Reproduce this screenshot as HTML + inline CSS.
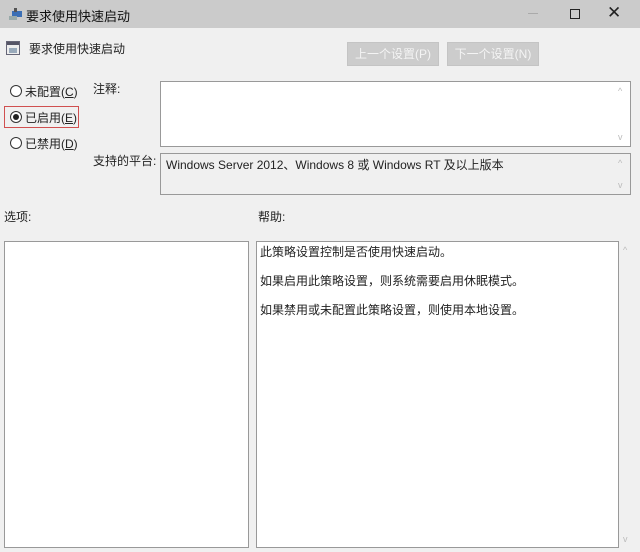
<!DOCTYPE html>
<html><head><meta charset="utf-8"><style>
*{margin:0;padding:0;box-sizing:border-box}
body{width:640px;height:552px;background:#f0f0f0;font-family:"Liberation Sans","Noto Sans CJK SC",sans-serif;font-size:12px;color:#222;position:relative;overflow:hidden}
.a{position:absolute;white-space:nowrap}
.box{position:absolute;border:1px solid #999;background:#fff}
.btn{position:absolute;background:#ccc;border:1px solid #c4c4c4;color:#f4f4f4;text-align:center;line-height:22px;font-size:12px}
.radio{position:absolute;width:12px;height:12px;border:1px solid #333;border-radius:50%;background:#fff}
.sb{position:absolute;color:#bbb;font-size:9px}
</style></head><body>
<div class="a" style="left:0;top:0;width:640px;height:28px;background:#cbcbcb"></div>
<svg class="a" style="left:8px;top:7px" width="16" height="14"><rect x="4" y="4" width="10" height="6" fill="#3b6fb5"/><rect x="1" y="9" width="8" height="4" fill="#9aa"/><rect x="6" y="1" width="3" height="4" fill="#555"/></svg>
<div class="a" style="left:26px;top:6px;font-size:13px;color:#111">要求使用快速启动</div>
<div class="a" style="left:528px;top:13px;width:10px;height:1px;background:#aaa"></div>
<div class="a" style="left:570px;top:9px;width:10px;height:10px;border:1px solid #222"></div>
<div class="a" style="left:607px;top:3px;font-size:17px;color:#222">✕</div>
<svg class="a" style="left:6px;top:41px" width="14" height="14"><rect x="0.5" y="0.5" width="13" height="13" fill="#eee" stroke="#667"/><rect x="1" y="1" width="12" height="3" fill="#556"/><rect x="3" y="7" width="8" height="5" fill="#9ab"/></svg>
<div class="a" style="left:29px;top:40px">要求使用快速启动</div>
<div class="btn" style="left:347px;top:42px;width:92px;height:24px">上一个设置(P)</div>
<div class="btn" style="left:447px;top:42px;width:92px;height:24px">下一个设置(N)</div>
<div class="radio" style="left:10px;top:85px"></div>
<div class="a" style="left:25px;top:83px">未配置(<u>C</u>)</div>
<div class="a" style="left:4px;top:106px;width:75px;height:22px;border:1px solid #d05050"></div>
<div class="radio" style="left:10px;top:111px"></div>
<div class="a" style="left:13px;top:114px;width:6px;height:6px;border-radius:50%;background:#222"></div>
<div class="a" style="left:25px;top:109px">已启用(<u>E</u>)</div>
<div class="radio" style="left:10px;top:137px"></div>
<div class="a" style="left:25px;top:135px">已禁用(<u>D</u>)</div>
<div class="a" style="left:93px;top:80px">注释:</div>
<div class="box" style="left:160px;top:81px;width:471px;height:66px"></div>
<div class="sb" style="left:618px;top:86px">^</div><div class="sb" style="left:618px;top:132px">v</div>
<div class="a" style="left:93px;top:152px">支持的平台:</div>
<div class="box" style="left:160px;top:153px;width:471px;height:42px;background:#f0f0f0"></div>
<div class="a" style="left:166px;top:156px">Windows Server 2012、Windows 8 或 Windows RT 及以上版本</div>
<div class="sb" style="left:618px;top:158px">^</div><div class="sb" style="left:618px;top:180px">v</div>
<div class="a" style="left:4px;top:208px">选项:</div>
<div class="a" style="left:258px;top:208px">帮助:</div>
<div class="box" style="left:4px;top:241px;width:245px;height:307px"></div>
<div class="box" style="left:256px;top:241px;width:363px;height:307px"></div>
<div class="a" style="left:260px;top:243px">此策略设置控制是否使用快速启动。</div>
<div class="a" style="left:260px;top:272px">如果启用此策略设置，则系统需要启用休眠模式。</div>
<div class="a" style="left:260px;top:301px">如果禁用或未配置此策略设置，则使用本地设置。</div>
<div class="sb" style="left:623px;top:245px">^</div><div class="sb" style="left:623px;top:534px">v</div>
</body></html>
